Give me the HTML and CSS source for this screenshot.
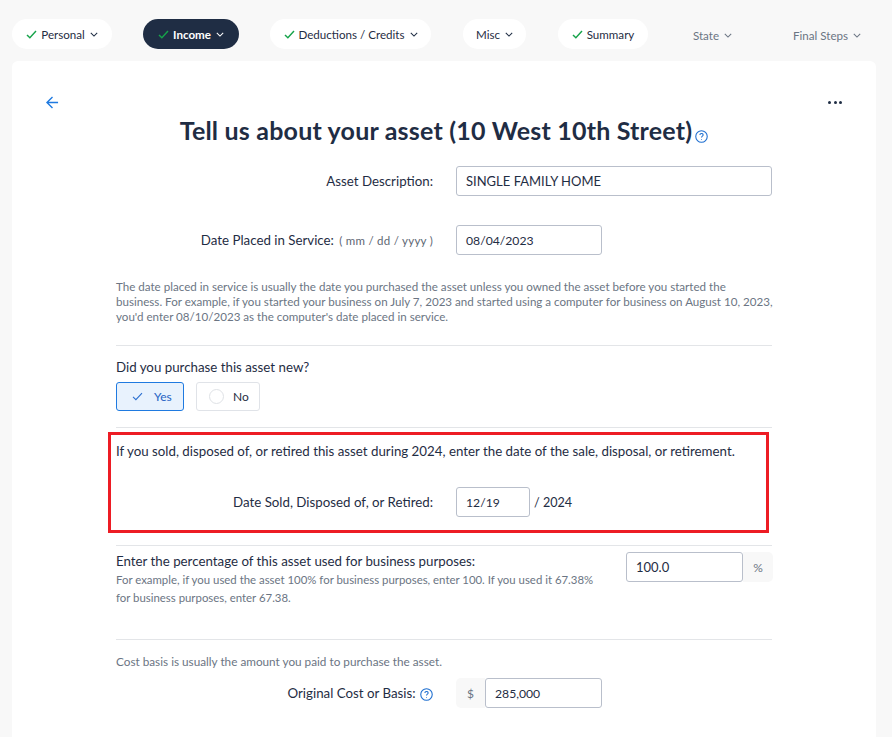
FILE: index.html
```html
<!DOCTYPE html>
<html lang="en">
<head>
    <meta charset="UTF-8">
    <meta name="viewport" content="width=device-width, initial-scale=1.0">
    <title>Tell us about your asset</title>
    <link rel="stylesheet" href="styles.css">
</head>
<body>
    <nav class="steps">
        <a class="step step-personal"><svg class="check" viewBox="0 0 12 10"><path d="M1 5.5 4.2 8.6 11 1.2"/></svg>Personal<svg class="chev" viewBox="0 0 10 6"><path d="M1 1l4 4 4-4"/></svg></a>
        <a class="step step-income active"><svg class="check" viewBox="0 0 12 10"><path d="M1 5.5 4.2 8.6 11 1.2"/></svg>Income<svg class="chev" viewBox="0 0 10 6"><path d="M1 1l4 4 4-4"/></svg></a>
        <a class="step step-deductions"><svg class="check" viewBox="0 0 12 10"><path d="M1 5.5 4.2 8.6 11 1.2"/></svg>Deductions / Credits<svg class="chev" viewBox="0 0 10 6"><path d="M1 1l4 4 4-4"/></svg></a>
        <a class="step step-misc">Misc<svg class="chev" viewBox="0 0 10 6"><path d="M1 1l4 4 4-4"/></svg></a>
        <a class="step step-summary"><svg class="check" viewBox="0 0 12 10"><path d="M1 5.5 4.2 8.6 11 1.2"/></svg>Summary</a>
        <a class="step step-state muted">State<svg class="chev" viewBox="0 0 10 6"><path d="M1 1l4 4 4-4"/></svg></a>
        <a class="step step-final muted">Final Steps<svg class="chev" viewBox="0 0 10 6"><path d="M1 1l4 4 4-4"/></svg></a>
    </nav>

    <main class="card">
        <div class="card-top">
            <svg class="back" viewBox="0 0 14 14"><path d="M13 7H1M7 1 1 7l6 6"/></svg>
            <div class="dots"><span></span><span></span><span></span></div>
        </div>
        <h1>Tell us about your asset (10 West 10th Street)<svg class="help help-title" viewBox="0 0 12 12"><circle cx="6" cy="6" r="5.3"/><path d="M4.5 4.7c0-2 3-2 3-.2 0 1.2-1.5 1.2-1.5 2.5"/><path d="M6 8.4v.6"/></svg></h1>

        <div class="form-row row-description">
            <label>Asset Description:</label>
            <div class="input wide">SINGLE FAMILY HOME</div>
        </div>
        <div class="form-row row-service">
            <label>Date Placed in Service: <small>( mm / dd / yyyy )</small></label>
            <div class="input medium num">08/04/2023</div>
        </div>
        <p class="note note-service">The date placed in service is usually the date you purchased the asset unless you owned the asset before you started the<br>business. For example, if you started your business on July 7, 2023 and started using a computer for business on August 10, 2023,<br>you'd enter 08/10/2023 as the computer's date placed in service.</p>

        <section class="block block-new">
            <p class="question">Did you purchase this asset new?</p>
            <div class="choices">
                <div class="choice selected"><svg class="tick" viewBox="0 0 12 10"><path d="M1 5.5 4.2 8.6 11 1.2"/></svg>Yes</div>
                <div class="choice"><span class="radio"></span>No</div>
            </div>
        </section>

        <section class="block block-sold">
            <div class="highlight"></div>
            <p class="question">If you sold, disposed of, or retired this asset during 2024, enter the date of the sale, disposal, or retirement.</p>
            <div class="form-row row-sold">
                <label>Date Sold, Disposed of, or Retired:</label>
                <div class="input short num">12/19</div>
                <span class="year">/ 2024</span>
            </div>
        </section>

        <section class="block block-percent">
            <div class="percent-text">
                <p class="question">Enter the percentage of this asset used for business purposes:</p>
                <p class="note">For example, if you used the asset 100% for business purposes, enter 100. If you used it 67.38% for business purposes, enter 67.38.</p>
            </div>
            <div class="group group-percent">
                <div class="input percent-input">100.0</div>
                <span class="addon addon-right">%</span>
            </div>
        </section>

        <section class="block block-cost">
            <p class="note">Cost basis is usually the amount you paid to purchase the asset.</p>
            <div class="form-row row-cost">
                <label>Original Cost or Basis: <svg class="help" viewBox="0 0 12 12"><circle cx="6" cy="6" r="5.3"/><path d="M4.5 4.7c0-2 3-2 3-.2 0 1.2-1.5 1.2-1.5 2.5"/><path d="M6 8.4v.6"/></svg></label>
                <div class="group">
                    <span class="addon addon-left">$</span>
                    <div class="input cost-input num">285,000</div>
                </div>
            </div>
        </section>
    </main>
</body>
</html>
```
FILE: styles.css
```css
* {
    box-sizing: border-box;
}
html, body {
    height: 100%;
    overflow: hidden;
}
body {
    margin: 0;
    background-color: #f8f8f8;
    color: #1f2d44;
    font-family: 'Lato', 'Noto Sans', sans-serif;
    font-size: 13.3px;
    padding: 19px 16px 0 12px;
}
.steps {
    display: flex;
    height: 30px;
}
.step {
    display: flex;
    align-items: center;
    justify-content: center;
    height: 30px;
    background-color: #fff;
    border-radius: 15px;
    font-size: 11.6px;
}
.step-personal { width: 100px; margin-right: 31px; }
.step-income { width: 96px; margin-right: 31px; font-weight: 700; }
.step-deductions { width: 161px; margin-right: 32px; }
.step-misc { width: 63px; margin-right: 32px; }
.step-summary { width: 90px; margin-right: 44px; }
.step-state { width: 41px; margin-right: 59px; }
.step-final { width: 70px; }
.step.active {
    background-color: #1f2d44;
    color: #fff;
}
.step.muted {
    background: none;
    color: #6b7583;
    padding-top: 2px;
}
.check {
    width: 11px;
    height: 9px;
    margin-right: 4px;
    fill: none;
    stroke: #16a34a;
    stroke-width: 1.6;
}
.chev {
    width: 8px;
    height: 5px;
    margin-left: 5px;
    fill: none;
    stroke: currentColor;
    stroke-width: 1.3;
}
.card {
    margin-top: 12px;
    height: 700px;
    background-color: #fff;
    border-radius: 6px;
    padding: 34px 104px 0;
}
.card-top {
    display: flex;
    justify-content: space-between;
    align-items: center;
    height: 14px;
    margin: 0 -70px;
}
.back {
    width: 13px;
    height: 13px;
    fill: none;
    stroke: #1f7ae0;
    stroke-width: 1.5;
}
.dots {
    display: flex;
    gap: 2.5px;
}
.dots span {
    width: 3px;
    height: 3px;
    border-radius: 50%;
    background-color: #1f2d44;
}
h1 {
    margin: 6px 0 0;
    font-size: 25px;
    line-height: 30px;
    font-weight: 700;
    letter-spacing: 0.2px;
    text-align: center;
}
.help {
    width: 13px;
    height: 13px;
    margin-left: 1px;
    fill: none;
    stroke: #1f6fd0;
    stroke-width: 1;
    vertical-align: -3px;
}
.help-title {
    margin-left: 3px;
    letter-spacing: 0;
}
.form-row {
    display: flex;
    align-items: center;
}
.form-row label {
    width: 317px;
    margin-right: 23px;
    text-align: right;
    flex-shrink: 0;
}
.form-row small {
    margin-left: 2px;
    font-size: 11.5px;
    letter-spacing: 0.25px;
    color: #5d6673;
}
.input {
    display: flex;
    align-items: center;
    height: 30px;
    padding: 0 9px;
    border: 1px solid #b9bfcb;
    border-radius: 3px;
    background-color: #fff;
    font-size: 13px;
}
.input.num {
    font-size: 12.2px;
}
.wide { width: 316px; }
.medium { width: 146px; }
.short { width: 74px; }
.row-description { margin-top: 21px; }
.row-service { margin-top: 29px; }
.note {
    margin: 0;
    font-size: 11.75px;
    line-height: 15px;
    color: #6b7583;
}
.note-service {
    margin-top: 24px;
    margin-right: -10px;
    font-size: 11.6px;
}
.block {
    border-top: 1px solid #e3e5e8;
    position: relative;
}
.question {
    margin: 0;
    font-size: 13.3px;
    line-height: 18px;
}
.block-new {
    height: 82px;
    margin-top: 21px;
    padding-top: 12px;
}
.choices {
    display: flex;
    gap: 12px;
    margin-top: 6px;
}
.choice {
    display: flex;
    align-items: center;
    height: 29px;
    border: 1px solid #e0e3e8;
    border-radius: 3px;
    font-size: 12px;
    width: 64px;
    padding-left: 12px;
}
.choice.selected {
    width: 68px;
    background-color: #e8f2fd;
    border-color: #1f7ae0;
    color: #2563c4;
    padding-left: 15px;
}
.tick {
    width: 11px;
    height: 9px;
    margin-right: 11px;
    fill: none;
    stroke: #2a6fd0;
    stroke-width: 1.2;
}
.radio {
    width: 15px;
    height: 15px;
    margin-right: 9px;
    border: 1px solid #dfe2e6;
    border-radius: 50%;
}
.block-sold {
    height: 118px;
    padding-top: 14px;
}
.highlight {
    position: absolute;
    left: -8px;
    top: 4px;
    width: 661px;
    height: 101px;
    border: 3px solid #ed1c24;
}
.row-sold { margin-top: 27px; }
.year {
    margin-left: 4px;
    font-size: 12.6px;
}
.block-percent {
    display: flex;
    justify-content: space-between;
    height: 94px;
    padding-top: 6px;
}
.percent-text {
    width: 490px;
}
.percent-text .question { margin-bottom: 1px; }
.percent-text .note {
    font-size: 11.4px;
    line-height: 18px;
}
.group {
    display: flex;
    height: 30px;
}
.group-percent {
    margin-right: -1px;
}
.addon {
    display: flex;
    align-items: center;
    justify-content: center;
    background-color: #f8f8f8;
    color: #6b7583;
    font-size: 12px;
    width: 30px;
}
.addon-right { border-radius: 0 5px 5px 0; }
.addon-left { border-radius: 5px 0 0 5px; width: 29px; }
.percent-input {
    width: 117px;
}
.cost-input {
    width: 117px;
}
.block-cost {
    padding-top: 14px;
}
.row-cost { margin-top: 9px; }
```
